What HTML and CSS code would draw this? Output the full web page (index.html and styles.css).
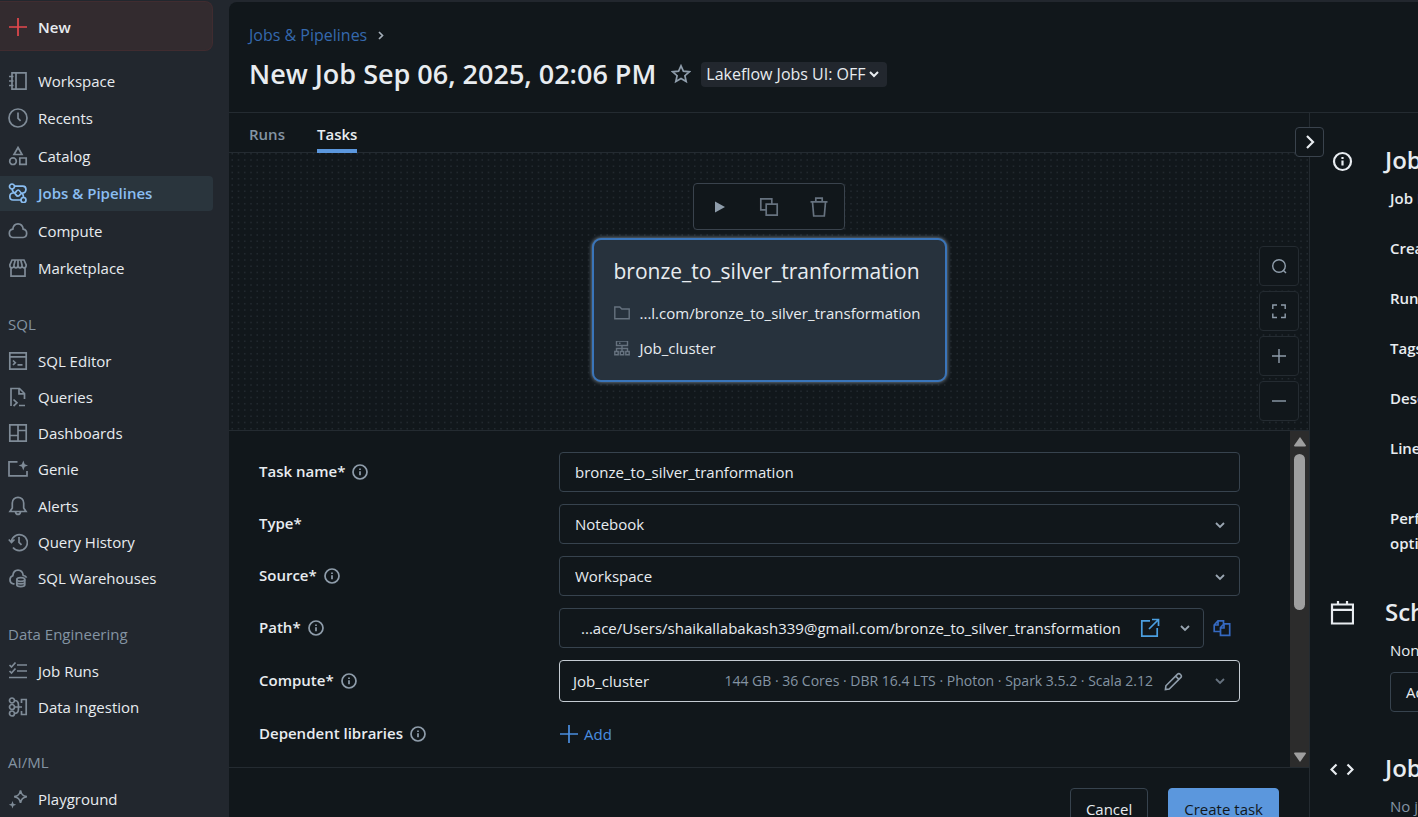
FILE: index.html
```html
<!DOCTYPE html>
<html lang="en">
<head>
<meta charset="utf-8">
<title>New Job - Jobs &amp; Pipelines</title>
<link rel="stylesheet" href="styles.css">
</head>
<body>
<svg class="defs" aria-hidden="true">
  <symbol id="info" viewBox="0 0 16 16"><circle cx="8" cy="8" r="7"/><path d="M8 7.2v4M8 4.4v1.600"/></symbol>
  <symbol id="chev" viewBox="0 0 12 12"><path d="M2 4l4 4 4-4"/></symbol>
</svg>

<nav class="sidebar" aria-label="Main">
  <button class="new-btn" type="button">
    <svg class="icon" viewBox="0 0 20 20"><path d="M10 1v18M1 10h18"/></svg>New
  </button>
  <div class="group group-main">
    <a class="item" href="#"><svg class="icon" viewBox="0 0 20 20"><path d="M4 1.800h14v16.400H4zM8 2v16M1 5.500h4.500M1 10h4.500M1 14.500h4.500"/></svg>Workspace</a>
    <a class="item" href="#"><svg class="icon" viewBox="0 0 20 20"><circle cx="10" cy="10" r="9"/><path d="M10 4.500v5.800l2.600 2.600"/></svg>Recents</a>
    <a class="item" href="#"><svg class="icon" viewBox="0 0 20 20"><path d="M10 1.500l4 7H6zM11.800 12h6.400v6.400h-6.400z"/><circle cx="5" cy="15.200" r="3.300"/></svg>Catalog</a>
    <a class="item active" href="#" aria-current="page"><svg class="icon" viewBox="0 0 20 20"><circle cx="4" cy="3.500" r="2.500"/><circle cx="15.500" cy="17" r="2.500"/><path d="M6.500 3.200h8.300c4.200 0 4.200 6.800 0 6.800H13.500M6.500 10H5c-4.200 0-4.200 7 0 7h8M4 6c.6 2.400 1.500 4 3 4 1.400-1.500 2-3 3.200-3 1.500 0 2.200 3 3.400 3M6.500 10c1.400 1.500 2 3.200 3.500 3.200s2-1.700 3.500-3.200c1.300.4 1.800 2 2 4.200"/></svg>Jobs &amp; Pipelines</a>
    <a class="item" href="#"><svg class="icon" viewBox="0 0 20 20"><path d="M5 16.500a4.200 4.200 0 0 1-.2-8.300C5.200 4.800 7.400 2.800 10 2.800s4.800 2 5.200 5.400A4.200 4.200 0 0 1 15 16.500z"/></svg>Compute</a>
    <a class="item" href="#"><svg class="icon" viewBox="0 0 20 20"><path d="M3 10v8.200h14V10M4 2h12l2.200 5c0 3.800-4.100 3.800-4.100.3 0 3.500-4.100 3.500-4.100 0 0 3.500-4.100 3.500-4.100 0 0 3.500-4.100 3.500-4.100-.3zM7.300 2L5.900 7.300M10 2v5.300M12.700 2l1.400 5.300"/></svg>Marketplace</a>
  </div>

  <h2 class="group-label">SQL</h2>
  <div class="group group-sql">
    <a class="item" href="#"><svg class="icon" viewBox="0 0 20 20"><path d="M1.800 1.800h16.400v16.400H1.800zM2 5.800h16M5 9.500l2.300 2.200L5 14M9.500 13.800h5"/></svg>SQL Editor</a>
    <a class="item" href="#"><svg class="icon" viewBox="0 0 20 20"><path d="M3 19V1.500h8.500l5 5V12M11 1.500v5.300h5.500M5.500 12.500L9 15.800 5.500 19M11 18.500h6"/></svg>Queries</a>
    <a class="item" href="#"><svg class="icon" viewBox="0 0 20 20"><path d="M1.800 1.800h16.400v16.400H1.800zM10 2v16M2 12.500h8M10 7.500h8"/></svg>Dashboards</a>
    <a class="item" href="#"><svg class="icon" viewBox="0 0 20 20"><path d="M9.500 2.800H1v14h18V12"/><path class="solid" d="M15.300 1.500l1.400 3.700 3.300 1.300-3.300 1.300-1.400 3.700-1.400-3.700-3.300-1.300 3.300-1.300z"/></svg>Genie</a>
    <a class="item" href="#"><svg class="icon" viewBox="0 0 20 20"><path d="M2 15.500h16L15.700 12V7a5.700 5.700 0 0 0-11.400 0v5zM7.500 16c.5 3.200 4.500 3.200 5 0"/></svg>Alerts</a>
    <a class="item" href="#"><svg class="icon" viewBox="0 0 20 20"><path d="M3.400 9.500A8 8 0 1 1 5 15.500M11 5v5.300l2.500 2.500M.8 7.500l2.700 3 3-3"/></svg>Query History</a>
    <a class="item" href="#"><svg class="icon" viewBox="0 0 20 20"><path d="M6.500 15.800H5a4.200 4.200 0 0 1-.2-8C5.200 4.200 7.400 2.200 10 2.200c2.800 0 4.800 2 5.200 5.300 1.700.2 2.800 1 3.400 2.200M8.800 11.500v5.300c0 2.500 8 2.500 8 0v-5.300M8.800 14.200c0 2.200 8 2.200 8 0"/><ellipse cx="12.800" cy="11.500" rx="4" ry="1.800"/></svg>SQL Warehouses</a>
  </div>

  <h2 class="group-label">Data Engineering</h2>
  <div class="group group-data">
    <a class="item" href="#"><svg class="icon" viewBox="0 0 20 20"><path d="M9 4h10M9 10h10M1 16.500h18M1.500 4l2 2 4-4.500M1.500 10l2 2 4-4.500"/></svg>Job Runs</a>
    <a class="item" href="#"><svg class="icon" viewBox="0 0 20 20"><circle cx="4" cy="3.500" r="2.500"/><circle cx="4" cy="10" r="2.500"/><circle cx="4" cy="16.500" r="2.500"/><path d="M6.500 3.500c4 0 4 3 4 6.500s0 6.500-4 6.500M6.500 10H14M13.500 6V2.500h4.700v15h-4.700V14"/></svg>Data Ingestion</a>
  </div>

  <h2 class="group-label">AI/ML</h2>
  <div class="group">
    <a class="item" href="#"><svg class="icon" viewBox="0 0 20 20"><path d="M12.500 1.500c.8 4 2.200 5.300 6.300 6.200-4.100.9-5.500 2.200-6.300 6.200-.8-4-2.200-5.300-6.300-6.200 4.100-.9 5.500-2.200 6.300-6.200z"/><path class="solid" d="M4.500 12l1 2.700 2.700 1-2.700 1-1 2.700-1-2.700-2.700-1 2.700-1z"/></svg>Playground</a>
  </div>
</nav>

<main class="main">
  <header class="header">
    <div class="crumbs"><a href="#">Jobs &amp; Pipelines</a><svg class="crumb-arrow" viewBox="0 0 12 12"><path d="M4 3l3.500 3.500L4 10"/></svg></div>
    <div class="title-row">
      <h1>New Job Sep 06, 2025, 02:06 PM</h1>
      <button class="star" type="button" aria-label="Add to favorites"><svg viewBox="0 0 20 20"><path d="M10 1.800l2.400 5.400 5.900.6-4.400 3.900 1.300 5.800L10 14.500l-5.200 3 1.300-5.800-4.400-3.900 5.900-.6z"/></svg></button>
      <button class="pill" type="button">Lakeflow Jobs UI: OFF<svg viewBox="0 0 12 12"><use href="#chev"/></svg></button>
    </div>
  </header>

  <div class="content">
    <section class="left">
      <div class="tabs" role="tablist">
        <button class="tab" type="button" role="tab" aria-selected="false">Runs</button>
        <button class="tab selected" type="button" role="tab" aria-selected="true">Tasks</button>
      </div>

      <div class="canvas">
        <svg class="dots" aria-hidden="true">
          <defs><pattern id="grid" width="25" height="25" patternUnits="userSpaceOnUse" viewBox="0 0 4 4"><path d="M.4 0h.24v.24H.4zm1 0h.24v.24H1.400zm1 0h.24v.24H2.400zm1 0h.24v.24H3.400zM.4 1h.24v.24H.4zm1 0h.24v.24H1.400zm1 0h.24v.24H2.400zm1 0h.24v.24H3.400zM.4 2h.24v.24H.4zm1 0h.24v.24H1.400zm1 0h.24v.24H2.400zm1 0h.24v.24H3.400zM.4 3h.24v.24H.4zm1 0h.24v.24H1.400zm1 0h.24v.24H2.400zm1 0h.24v.24H3.400z"/></pattern></defs>
          <rect width="100%" height="100%" fill="url(#grid)"/>
        </svg>
        <div class="node-tools">
          <button type="button" aria-label="Run task"><svg viewBox="0 0 20 20"><path class="solid" d="M6 4.500v11l10-5.500z"/></svg></button>
          <button type="button" aria-label="Clone task"><svg viewBox="0 0 20 20"><path d="M7.200 7.200h11v11h-11zM7 12.800H1.800v-11h11V7"/></svg></button>
          <button type="button" aria-label="Delete task"><svg viewBox="0 0 20 20"><path d="M1.500 4.800h17M3.500 5l1.200 14h10.600L16.500 5M6.800 4.500V1.200h6.400v3.300"/></svg></button>
        </div>
        <article class="node">
          <h2>bronze_to_silver_tranformation</h2>
          <p><svg viewBox="0 0 16 16"><path d="M.8 1h5l2 2h7.400v9.800H.8z"/></svg>...l.com/bronze_to_silver_transformation</p>
          <p><svg viewBox="0 0 16 16"><path d="M2.500 0h11v4.500h-11zM8 4.500V11M2.500 10V7.500h11V10M.8 10.500h3.400v3.200H.8zM6.300 10.500h3.400v3.200H6.300zM11.800 10.500h3.400v3.200h-3.400zM5 2.200h1.500"/></svg>Job_cluster</p>
        </article>
        <div class="zoom">
          <button type="button" aria-label="Search"><svg viewBox="0 0 16 16"><circle cx="8" cy="8" r="6.300"/><path d="M12 12l3 3"/></svg></button>
          <button type="button" aria-label="Fit view"><svg viewBox="0 0 16 16"><path d="M1.800 6V2H6M10 2h4.200v4M14.200 10.500v4H10M6 14.500H1.800v-4"/></svg></button>
          <button type="button" aria-label="Zoom in"><svg viewBox="0 0 16 16"><path d="M8 1v14M1 8h14"/></svg></button>
          <button type="button" aria-label="Zoom out"><svg viewBox="0 0 16 16"><path d="M1 8h14"/></svg></button>
        </div>
      </div>

      <div class="form-area">
        <form class="form" id="task-form">
          <div class="row">
            <div class="label"><label for="task-name">Task name*</label><svg><use href="#info"/></svg></div>
            <input class="box" id="task-name" type="text" value="bronze_to_silver_tranformation">
          </div>
          <div class="row">
            <div class="label"><label for="type">Type*</label></div>
            <div class="select-wrap"><select class="box" id="type"><option>Notebook</option></select><svg class="chev"><use href="#chev"/></svg></div>
          </div>
          <div class="row">
            <div class="label"><label for="source">Source*</label><svg><use href="#info"/></svg></div>
            <div class="select-wrap"><select class="box" id="source"><option>Workspace</option></select><svg class="chev"><use href="#chev"/></svg></div>
          </div>
          <div class="row">
            <div class="label"><label for="path">Path*</label><svg><use href="#info"/></svg></div>
            <div class="path-line">
              <div class="box path-box">
                <button id="path" class="path-text" type="button">...ace/Users/shaikallabakash339@gmail.com/bronze_to_silver_transformation</button>
                <a class="open" href="#" aria-label="Open notebook"><svg viewBox="0 0 20 20"><path d="M10 2.800H1.800v15.400h15.400V10M12 1.500h6.500V8M18.500 1.500L9 11"/></svg></a>
                <svg class="chev"><use href="#chev"/></svg>
              </div>
              <button class="copy" type="button" aria-label="Copy path"><svg viewBox="0 0 18 18"><path d="M7 12.500H1.200V6L5 1.800h5.500V5M5 2v4H1.500M7.500 16.300V8.500L11 4.800h5.700v11.500zM11 5v4H7.500"/></svg></button>
            </div>
          </div>
          <div class="row">
            <div class="label"><label for="compute">Compute*</label><svg><use href="#info"/></svg></div>
            <div class="box compute-box">
              <button id="compute" class="compute-name" type="button">Job_cluster</button>
              <span class="specs">144 GB · 36 Cores · DBR 16.4 LTS · Photon · Spark 3.5.2 · Scala 2.12</span>
              <button class="edit" type="button" aria-label="Edit cluster"><svg viewBox="0 0 20 20"><path d="M1.500 18.500l.5-4L14.300 2.200c1.800-1.800 5.300 1.700 3.500 3.500L5.500 18zM12.200 4.300l3.500 3.500"/></svg></button>
              <svg class="chev dim"><use href="#chev"/></svg>
            </div>
          </div>
          <div class="row">
            <div class="label"><span>Dependent libraries</span><svg><use href="#info"/></svg></div>
            <button class="add" type="button"><svg viewBox="0 0 20 20"><path d="M10 1v18M1 10h18"/></svg>Add</button>
          </div>
        </form>
        <div class="scrollbar" aria-hidden="true">
          <svg viewBox="0 0 12 10"><path d="M6 0l6 8.500q0 1-1 1H1q-1 0-1-1z"/></svg>
          <div class="thumb"></div>
          <svg class="down" viewBox="0 0 12 10"><path d="M6 10l6-8.500q0-1-1-1H1q-1 0-1 1z"/></svg>
        </div>
      </div>

      <footer class="footer">
        <button class="btn" type="button">Cancel</button>
        <button class="btn primary" type="submit" form="task-form">Create task</button>
      </footer>
    </section>

    <aside class="details">
      <button class="collapse" type="button" aria-label="Collapse panel"><svg viewBox="0 0 16 16"><path d="M5 2l6 6-6 6"/></svg></button>
      <div class="clip">
        <section class="block">
          <svg class="block-icon" viewBox="0 0 24 24"><circle cx="12.500" cy="12.500" r="8.500"/><path d="M12.500 11.500v5M12.500 8v2"/></svg>
          <div>
            <h2>Job details</h2>
            <dl>
              <dt>Job ID</dt><dt>Creator</dt><dt>Run as</dt><dt>Tags</dt><dt>Description</dt><dt class="tall">Lineage</dt><dt>Performance<br>optimized</dt>
            </dl>
          </div>
        </section>
        <section class="block">
          <svg class="block-icon" viewBox="0 0 24 24"><path d="M2 3.500h21V22.500H2zM2 8.800h21M8 0v3.500M17 0v3.500"/></svg>
          <div>
            <h2>Schedules &amp; Triggers</h2>
            <p>None</p>
            <button class="btn" type="button">Add trigger</button>
          </div>
        </section>
        <section class="block">
          <svg class="block-icon" viewBox="0 0 24 24"><path d="M6.500 7.500l-5 5 5 5M17.500 7.500l5 5-5 5"/></svg>
          <div>
            <h2>Job parameters</h2>
            <p class="muted">No job parameters are defined for this job</p>
          </div>
        </section>
      </div>
    </aside>
  </div>
</main>
</body>
</html>
```
FILE: styles.css
```css
:root {
  --bg: #11171b;
  --side: #22272e;
  --line: #242b31;
  --field: #37434e;
  --text: #e8ecf0;
  --muted: #8494a3;
  --icon: #7f8b97;
}

* { box-sizing: border-box; }

body {
  margin: 0;
  height: 100vh;
  display: flex;
  overflow: hidden;
  background: var(--side);
  color: var(--text);
  font: 15px/24px "Open Sans", "Noto Sans", sans-serif;
}

button, input, select { font: inherit; color: inherit; }
button { background: none; border: 0; padding: 0; }
a { color: inherit; text-decoration: none; }
h1, h2, p, dl { margin: 0; }
svg { fill: none; stroke: currentColor; stroke-width: 1.7; flex: none; }
.solid { fill: currentColor; stroke: none; }
.defs { position: absolute; width: 0; height: 0; }

/* Sidebar */
.sidebar { flex: none; width: 229px; padding: 1px 16px 0 0; }
.icon { width: 20px; height: 20px; color: var(--icon); }
.new-btn {
  display: flex;
  align-items: center;
  gap: 10px;
  width: 100%;
  height: 50px;
  margin-bottom: 12px;
  padding: 2px 8px 0;
  background: #332b2f;
  border: 1px solid #402c30;
  border-left: 0;
  border-radius: 0 8px 8px 0;
  font-weight: 600;
}
.new-btn .icon { color: #e5484d; }
.group { display: flex; flex-direction: column; justify-content: space-between; }
.group-main { height: 223px; }
.group-sql { height: 253px; }
.group-data { height: 71px; }
.group-label {
  margin-top: 20px;
  padding: 0 0 1px 8px;
  font-size: 15px;
  font-weight: 400;
  line-height: 36px;
  color: var(--muted);
}
.item {
  display: flex;
  align-items: center;
  gap: 10px;
  height: 35px;
  padding-left: 8px;
  border-radius: 0 4px 4px 0;
}
.item.active { background: #2a353d; color: #8abef2; font-weight: 600; }
.item.active .icon { color: inherit; }

/* Main */
.main {
  flex: 1;
  min-width: 0;
  display: flex;
  flex-direction: column;
  margin-top: 2px;
  background: var(--bg);
  border-top-left-radius: 8px;
  overflow: hidden;
}
.header { flex: none; padding: 21px 20px 18px; border-bottom: 1px solid var(--line); }
.crumbs { display: flex; align-items: center; gap: 8px; margin-bottom: 7px; color: #3569ae; font-size: 16px; }
.crumb-arrow { width: 12px; height: 12px; color: #a3adb7; }
.title-row { display: flex; align-items: center; height: 40px; }
h1 { font-size: 27px; line-height: 40px; font-weight: 600; white-space: nowrap; }
.star { display: flex; margin: 0 10px 0 15px; color: #8f9dab; }
.star svg { width: 20px; height: 20px; }
.pill {
  display: flex;
  align-items: center;
  gap: 2px;
  height: 25px;
  padding: 0 7px 0 5px;
  background: #22272e;
  border-radius: 4px;
  font-size: 16px;
}
.pill svg { width: 12px; height: 12px; stroke-width: 2; }

.content { flex: 1; min-height: 0; display: flex; }
.left { flex: 1; min-width: 0; }
.tabs { display: flex; gap: 32px; height: 40px; padding: 0 20px; border-bottom: 1px solid var(--line); }
.tab { height: 40px; padding-top: 5px; border-bottom: 4px solid transparent; color: var(--muted); font-weight: 600; }
.tab.selected { color: var(--text); border-color: #5b97dd; }

.canvas {
  position: relative;
  display: flex;
  flex-direction: column;
  align-items: center;
  gap: 8px;
  padding: 30px 0 48px;
  border-bottom: 1px solid var(--line);
}
.dots { position: absolute; inset: 0; width: 100%; height: 100%; stroke: none; }
.dots path { fill: #22292f; }
.node-tools, .node { position: relative; }
.node-tools {
  display: flex;
  align-items: center;
  justify-content: space-between;
  width: 152px;
  height: 47px;
  padding: 0 15px;
  background: var(--bg);
  border: 1px solid #3a434d;
  border-radius: 4px;
  color: #66727f;
}
.node-tools button { display: flex; }
.node-tools svg { width: 20px; height: 20px; }
.node-tools .solid { fill: #8f9dab; }
.node {
  min-width: 355px;
  padding: 13px 20px 14px;
  background: #27323d;
  border: 2px solid #3a75ba;
  border-radius: 9px;
  box-shadow: 0 0 4px #8797a8;
}
.node h2 { margin-bottom: 7px; font-size: 21px; line-height: 36px; font-weight: 400; }
.node p { display: flex; align-items: center; gap: 10px; line-height: 35px; }
.node p svg { width: 16px; height: 16px; color: #66727f; stroke-width: 1.4; }
.zoom { position: absolute; right: 10px; bottom: 9px; display: grid; gap: 5px; }
.zoom button {
  display: grid;
  place-items: center;
  width: 40px;
  height: 40px;
  background: var(--bg);
  border: 1px solid var(--line);
  border-radius: 4px;
  color: #8f9dab;
}
.zoom svg { width: 16px; height: 16px; stroke-width: 1.4; }

/* Task form */
.form-area { display: flex; border-bottom: 1px solid var(--line); }
.form { flex: 1; min-width: 0; display: grid; gap: 12px; padding: 21px 50px 13px 30px; }
.row { display: grid; grid-template-columns: 300px 1fr; align-items: center; min-height: 40px; }
.label { display: flex; align-items: center; gap: 7px; padding-bottom: 2px; font-weight: 600; }
.label svg { width: 16px; height: 16px; color: #8f9dab; margin-top: 2px; }
.box {
  width: 100%;
  min-width: 0;
  height: 40px;
  padding: 0 15px;
  background: var(--bg);
  border: 1px solid var(--field);
  border-radius: 4px;
}
.select-wrap { position: relative; }
.select-wrap select { appearance: none; }
.chev { width: 12px; height: 12px; color: #9aa6b2; stroke-width: 1.8; }
.select-wrap .chev { position: absolute; right: 14px; top: 15px; pointer-events: none; }
.chev.dim { color: #66727f; }
.path-line { display: flex; align-items: center; gap: 9px; }
.path-box { display: flex; align-items: center; padding: 0 12px 0 21px; }
.path-text { flex: 1; min-width: 0; text-align: left; white-space: nowrap; }
.open { display: flex; margin-right: 19px; color: #4b9fe0; }
.open svg { width: 20px; height: 20px; }
.copy { display: flex; margin-right: 9px; color: #3569c0; }
.copy svg { width: 18px; height: 18px; }
.compute-box { display: flex; align-items: center; height: 42px; padding: 0 13px; border-color: #c5ccd3; }
.specs { margin-left: auto; font-size: 14px; color: var(--muted); white-space: nowrap; }
.edit { display: flex; margin: 0 31px 0 11px; color: #8f9dab; }
.edit svg { width: 19px; height: 19px; }
.add { display: flex; align-items: center; gap: 5px; color: #4a8ee0; }
.add svg { width: 20px; height: 20px; }

.scrollbar {
  flex: none;
  width: 19px;
  display: flex;
  flex-direction: column;
  align-items: center;
  padding: 6px 0 5px;
  background: #2c2c2c;
}
.scrollbar svg { width: 12px; height: 10px; fill: #9f9f9f; stroke: none; }
.thumb { width: 11px; height: 156px; margin-top: 7px; background: #9f9f9f; border-radius: 6px; }
.down { margin-top: auto; }

.footer { display: flex; justify-content: flex-end; gap: 20px; padding: 20px 30px; }
.btn { height: 42px; padding: 0 15px; border: 1px solid var(--field); border-radius: 4px; }
.primary { background: #5b97dd; border-color: #5b97dd; color: #11171b; }

/* Details panel */
.details { position: relative; flex: none; width: 109px; border-left: 1px solid var(--line); }
.collapse {
  position: absolute;
  left: -15px;
  top: 14px;
  display: grid;
  place-items: center;
  width: 29px;
  height: 30px;
  background: var(--bg);
  border: 1px solid #3a434d;
  border-radius: 4px;
}
.collapse svg { width: 16px; height: 16px; stroke-width: 2.2; }
.clip { height: 100%; overflow: hidden; padding: 31px 0 0 20px; }
.block { display: flex; gap: 31px; width: 400px; margin-bottom: 40px; }
.block-icon { width: 24px; height: 24px; margin-top: 5px; stroke-width: 2.2; }
.block h2 { margin-bottom: 10px; font-size: 24px; line-height: 32px; font-weight: 600; }
.block dl, .block p { padding-left: 5px; line-height: 25px; }
.block dt { margin-bottom: 25px; font-weight: 600; }
.block dt.tall { margin-bottom: 45px; }
.block dt:last-child { margin-bottom: 0; }
.block .btn { height: 40px; margin: 9px 0 0 5px; }
.muted { color: var(--muted); }
```
